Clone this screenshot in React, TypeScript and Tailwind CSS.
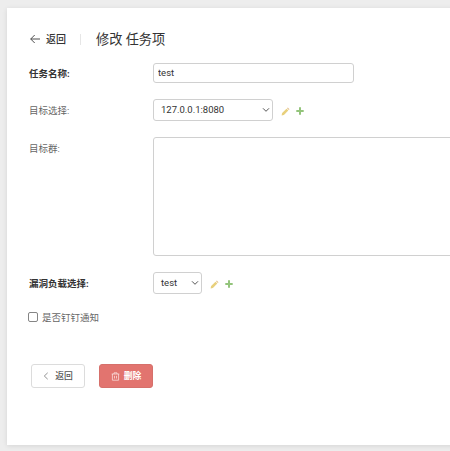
import type { ReactNode } from "react";

const PencilIcon = () => (
  <svg width="9" height="9" viewBox="0 0 9 9" className="shrink-0">
    <path d="M0.6 8.4 L1.1 6.1 L5.5 1.7 L7.3 3.5 L2.9 7.9 Z" fill="#e8d07c" />
    <path d="M6 1.2 L6.8 0.5 L8.5 2.2 L7.8 3 Z" fill="#e3c08c" />
  </svg>
);

const PlusIcon = () => (
  <svg width="8" height="8" viewBox="0 0 8 8" className="shrink-0">
    <path d="M3 0.3h2V3h2.7v2H5v2.7H3V5H0.3V3H3z" fill="#93c47b" />
  </svg>
);

const BackIcon = () => (
  <svg width="12" height="10" viewBox="0 0 12 10" fill="none" stroke="#444" strokeWidth="0.95" className="shrink-0">
    <path d="M5.7 1 L1.7 5 L5.7 9 M1.7 5 H11" />
  </svg>
);

const TrashIcon = () => (
  <svg width="9" height="9" viewBox="0 0 9 9" fill="none" stroke="#fbe4e3" strokeWidth="0.75" className="shrink-0">
    <path d="M0.7 2h7.6M3 2V0.8h3V2M1.4 2v6.2h6.2V2M3.5 3.8v2.7M5.5 3.8v2.7" />
  </svg>
);

const Label = ({ children, bold }: { children: ReactNode; bold?: boolean }) => (
  <label
    className={
      bold
        ? "block w-[124px] shrink-0 pt-[2px] text-[9.5px] leading-[14px] font-bold text-[#333]"
        : "block w-[124px] shrink-0 pt-[2px] text-[9.5px] leading-[14px] text-[#666]"
    }
  >
    {children}
  </label>
);

const SelectBox = ({ value, className }: { value: string; className: string }) => (
  <div className={`flex h-[22px] items-center justify-between rounded-[3px] border border-[#d0d0d0] pr-[2px] pl-[7px] text-[9.5px] text-[#333] ${className}`}>
    <span>{value}</span>
    <svg width="8" height="6" viewBox="0 0 8 6" fill="none" stroke="#555" strokeWidth="1">
      <path d="M1 1.3 L4 4.3 L7 1.3" />
    </svg>
  </div>
);

const RowActions = () => (
  <div className="ml-2 flex items-center gap-[6px] pt-[2px]">
    <PencilIcon />
    <PlusIcon />
  </div>
);

const App = () => {
  return (
    <div className="h-[451px] w-[450px] overflow-hidden bg-[#ededed] pt-2 pl-[7px] font-[Roboto,'Noto_Sans_CJK_SC',sans-serif]">
      <div className="h-[437px] w-[460px] bg-white pt-5 pl-[22px] shadow-[0_1px_5px_rgba(0,0,0,0.10)]">
        {/* Header */}
        <div className="flex h-[22px] items-center text-[#333]">
          <BackIcon />
          <span className="ml-[5px] text-[10px] font-medium">返回</span>
          <span className="ml-[14px] h-[11px] w-px bg-[#e6e6e6]" />
          <h1 className="ml-[15px] pt-px text-[13.2px] leading-[20px]">修改 任务项</h1>
        </div>

        {/* Form */}
        <div className="mt-[12px] flex h-[21px] items-center">
          <Label bold>任务名称:</Label>
          <input
            readOnly
            defaultValue="test"
            className="h-[20px] w-[201px] rounded-[3px] border border-[#d0d0d0] px-1 text-[9.5px] text-[#333] outline-none"
          />
        </div>
        <div className="mt-[16px] flex h-[22px] items-center">
          <Label>目标选择:</Label>
          <SelectBox value="127.0.0.1:8080" className="w-[120px]" />
          <RowActions />
        </div>
        <div className="mt-[16px] flex h-[119px] items-start">
          <div className="shrink-0 pt-[3px]">
            <Label>目标群:</Label>
          </div>
          <textarea readOnly className="h-[119px] w-[320px] shrink-0 resize-none rounded-[3px] border border-[#d0d0d0] outline-none" />
        </div>
        <div className="mt-[16px] flex h-[22px] items-center">
          <Label bold>漏洞负载选择:</Label>
          <SelectBox value="test" className="w-[49px]" />
          <RowActions />
        </div>
        <label className="mt-[16px] flex h-[14px] items-center text-[9.5px] leading-[14px] text-[#666]">
          <input type="checkbox" className="-ml-px h-[10px] w-[10px] appearance-none rounded-[2px] border border-[#858585]" />
          <span className="ml-1 pt-px">是否钉钉通知</span>
        </label>

        {/* Actions */}
        <div className="mt-[40px] ml-[2px] flex gap-[14px]">
          <button className="flex h-[24px] w-[54px] items-center justify-center gap-[6px] rounded-[3px] border border-[#dcdcdc] text-[8.8px] font-medium text-[#555]">
            <svg width="6" height="8" viewBox="0 0 6 8" fill="none" stroke="#777" strokeWidth="0.8">
              <path d="M4.7 0.8 L1.3 4 L4.7 7.2" />
            </svg>
            <span className="pt-[2px]">返回</span>
          </button>
          <button className="flex h-[24px] w-[54px] items-center justify-center gap-[4px] rounded-[3px] border border-[#d6706b] bg-[#e2746f] text-[8.8px] font-bold text-white">
            <TrashIcon />
            <span className="pt-[2px]">删除</span>
          </button>
        </div>
      </div>
    </div>
  );
};

export default App;
